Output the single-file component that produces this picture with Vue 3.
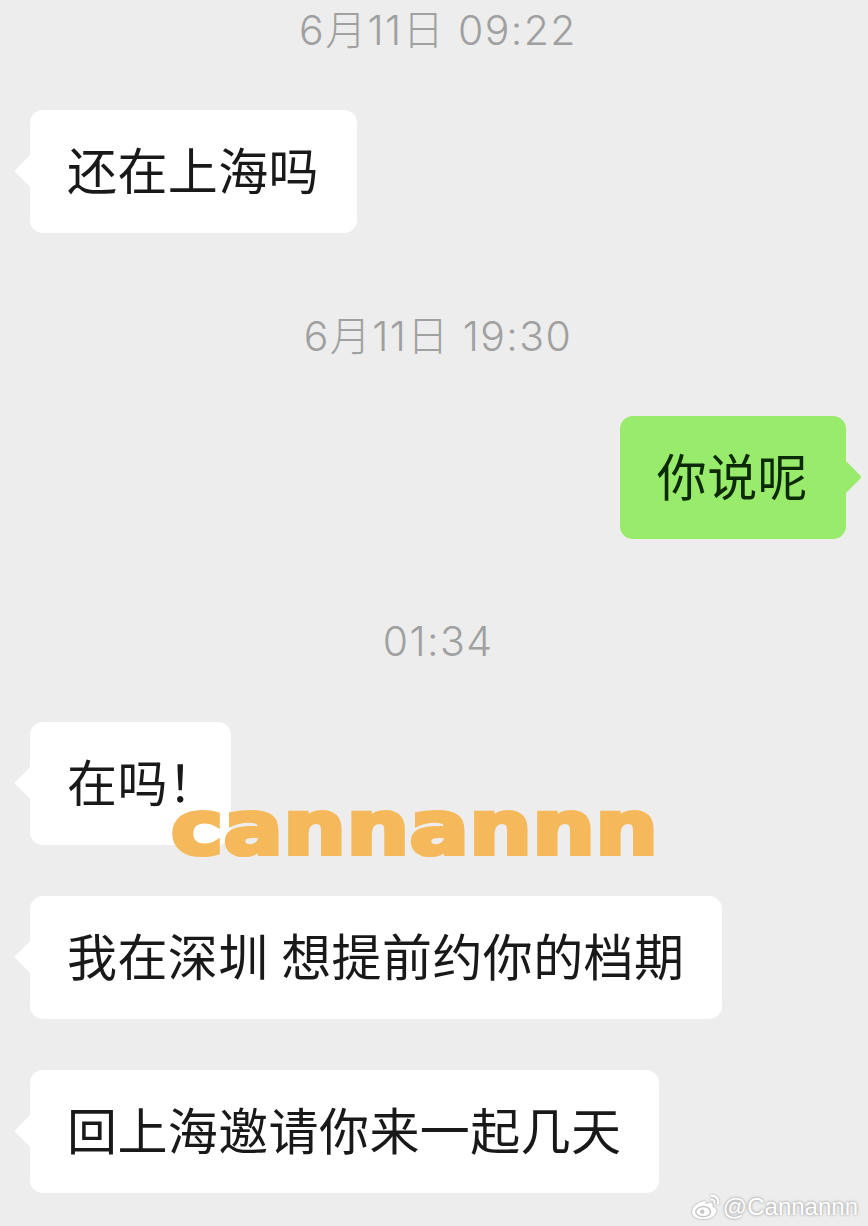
<script setup>
// 聊天记录：时间 + 气泡
const items = [
  { id: 1, type: "time", text: "6月11日 09:22", gap: 0 },
  { id: 2, type: "left", text: "还在上海吗", gap: 50 },
  { id: 3, type: "time", text: "6月11日 19:30", gap: 73 },
  { id: 4, type: "right", text: "你说呢", gap: 50 },
  { id: 5, type: "time", text: "01:34", gap: 72 },
  { id: 6, type: "left", text: "在吗！", gap: 51, trim: -25 },
  { id: 7, type: "left", text: "我在深圳 想提前约你的档期", gap: 51 },
  { id: 8, type: "left", text: "回上海邀请你来一起几天", gap: 51 },
];
</script>

<template>
  <div class="page">
    <template v-for="item in items" :key="item.id">
      <div v-if="item.type === 'time'" class="time" :style="{ marginTop: item.gap + 'px' }">
        {{ item.text }}
      </div>
      <div v-else class="row" :class="item.type" :style="{ marginTop: item.gap + 'px' }">
        <div class="bubble">
          <span :style="{ marginRight: (item.trim || 0) + 'px' }">{{ item.text }}</span>
        </div>
      </div>
    </template>

    <div class="stamp">cannannn</div>

    <div class="credit">
      <svg class="weibo" viewBox="0 0 32 28" width="30" height="26">
        <path
          d="M13 8c-6 1-12 6-12 11 0 5 6 8 12 8 8 0 14-4 14-9 0-3-3-4-4-4 1-3-1-5-4-4-2 .5-3 1-3 1 .5-3-1-4-3-3z"
          fill="#fff"
        />
        <ellipse cx="13" cy="19" rx="8" ry="5.5" fill="none" stroke="#c4c4c4" stroke-width="1.6" />
        <circle cx="12" cy="19" r="2.4" fill="#c4c4c4" />
        <path d="M22 2c4-.5 8 3 7 8" fill="none" stroke="#fff" stroke-width="2.4" stroke-linecap="round" />
        <path d="M22 6c2-.3 3.6 1.2 3.2 3.4" fill="none" stroke="#fff" stroke-width="2" stroke-linecap="round" />
      </svg>
      <span>@Cannannn</span>
    </div>
  </div>
</template>

<style scoped>
.page {
  position: relative;
  width: 868px;
  height: 1226px;
  overflow: hidden;
  background: #ededed;
  font-family: "Noto Sans CJK SC", "Liberation Sans", sans-serif;
}

.time {
  height: 60px;
  line-height: 60px;
  text-align: center;
  padding-left: 8px;
  font-family: "Inter", "Noto Sans CJK SC", sans-serif;
  font-size: 41px;
  font-weight: 300;
  letter-spacing: 1.4px;
  color: #a0a0a0;
}

.row {
  display: flex;
  padding: 0 30px;
}

.row.right {
  justify-content: flex-end;
  padding-right: 22px;
}

.bubble {
  position: relative;
  padding: 33px 38px 39px 37px;
  line-height: 51px;
  font-size: 50px;
  font-weight: 400;
  letter-spacing: 0.4px;
  word-spacing: 1px;
  color: #191919;
  background: #fff;
  border-radius: 13px;
  white-space: pre;
}

.bubble::before {
  content: "";
  position: absolute;
  top: 50%;
  width: 24px;
  height: 24px;
  margin-top: -13px;
  background: inherit;
  border-radius: 3px;
  transform: rotate(45deg);
}

.left .bubble::before {
  left: -11px;
}

.right .bubble {
  background: #99eb6b;
  color: #0c2a06;
}

.right .bubble::before {
  right: -11px;
}

.stamp {
  position: absolute;
  left: 171px;
  top: 769px;
  font-family: "DejaVu Sans", sans-serif;
  font-weight: 700;
  font-size: 88px;
  line-height: 110px;
  letter-spacing: 0.4px;
  color: #f5b95c;
  -webkit-text-stroke: 5px #f5b95c;
  transform: scaleY(0.85);
  transform-origin: 0 88px;
}

.credit {
  position: absolute;
  right: 10px;
  top: 1192px;
  display: flex;
  align-items: center;
  gap: 2px;
  font-family: "Liberation Sans", sans-serif;
  font-size: 24px;
  line-height: 30px;
  color: #fff;
  text-shadow: 0 0 3px rgba(0, 0, 0, 0.45);
}

.weibo {
  filter: drop-shadow(0 0 1px rgba(0, 0, 0, 0.35));
}
</style>
